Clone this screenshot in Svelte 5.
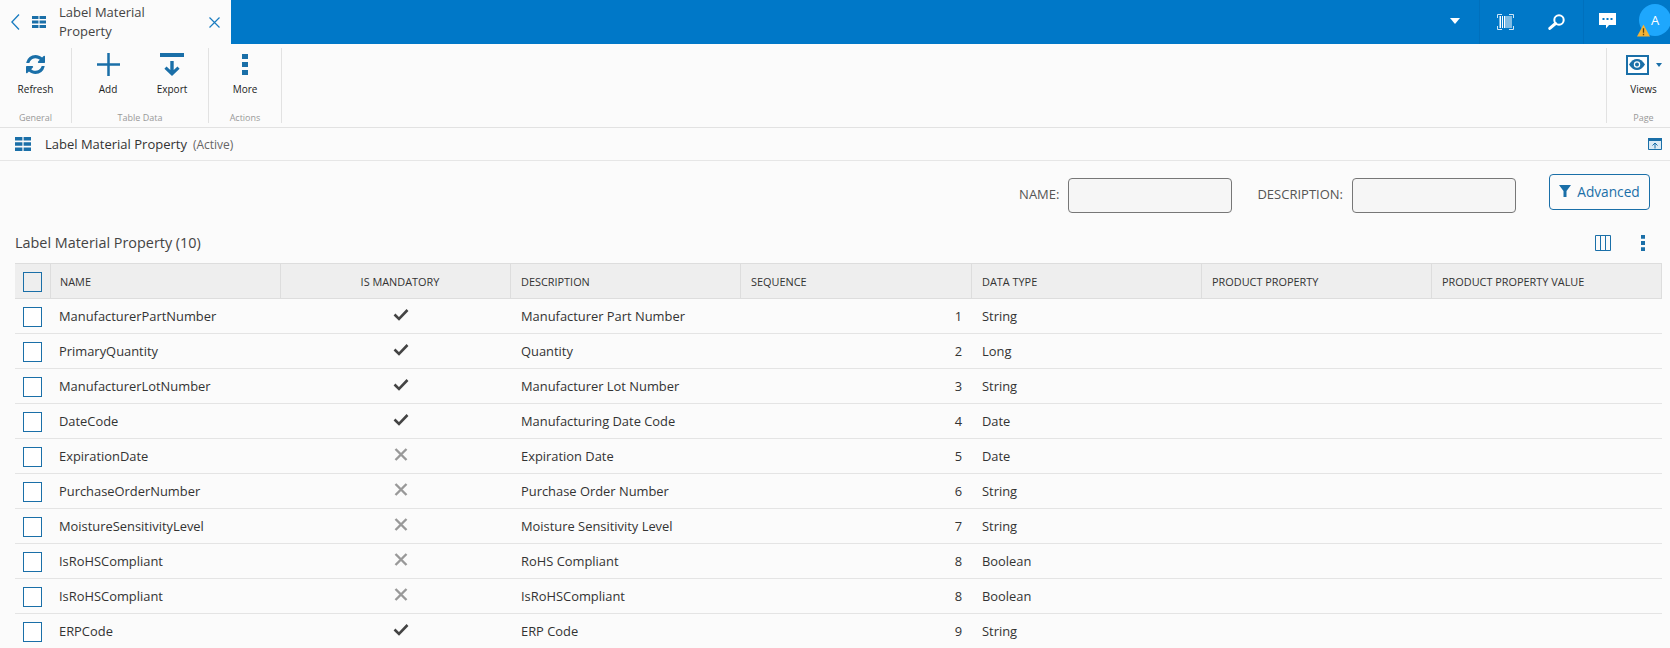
<script>
  const rows = [
    ['ManufacturerPartNumber', true, 'Manufacturer Part Number', 1, 'String'],
    ['PrimaryQuantity', true, 'Quantity', 2, 'Long'],
    ['ManufacturerLotNumber', true, 'Manufacturer Lot Number', 3, 'String'],
    ['DateCode', true, 'Manufacturing Date Code', 4, 'Date'],
    ['ExpirationDate', false, 'Expiration Date', 5, 'Date'],
    ['PurchaseOrderNumber', false, 'Purchase Order Number', 6, 'String'],
    ['MoistureSensitivityLevel', false, 'Moisture Sensitivity Level', 7, 'String'],
    ['IsRoHSCompliant', false, 'RoHS Compliant', 8, 'Boolean'],
    ['IsRoHSCompliant', false, 'IsRoHSCompliant', 8, 'Boolean'],
    ['ERPCode', true, 'ERP Code', 9, 'String']
  ];
</script>

{#snippet grid(w, h)}
  <svg class="grid-icon" width={w} height={h} viewBox="0 0 13 10" preserveAspectRatio="none">
    <path d="M0 0h6v2.5H0zM7 0h6v2.5H7zM0 3.75h6v2.5H0zM7 3.75h6v2.5H7zM0 7.5h6V10H0zM7 7.5h6V10H7z" fill="#1a6fa8" />
  </svg>
{/snippet}

{#snippet dots(w, h)}
  <svg width={w} height={h} viewBox="0 0 6 21" preserveAspectRatio="none"><path d="M0 0h6v5H0zM0 8h6v5H0zM0 16h6v5H0z" fill="#1a6fa8" /></svg>
{/snippet}

<div class="page">
  <header class="top">
    <div class="tab">
      <svg class="back" width="9" height="16" viewBox="0 0 9 16"><path d="M8 .5.9 8 8 15.500" fill="none" stroke="#1a7cc0" stroke-width="1.300" /></svg>
      {@render grid(14, 12)}
      <span class="tab-title">Label Material Property</span>
      <svg class="close" width="11" height="11" viewBox="0 0 11 11"><path d="M.5.5l10 10M10.500.5l-10 10" stroke="#1a7cc0" stroke-width="1.200" /></svg>
    </div>
    <div class="top-actions">
      <span class="caret"></span>
      <div class="sep"></div>
      <svg class="ti barcode" width="17" height="16" viewBox="0 0 17 16">
        <path d="M.5 4V.5H5M12 .5h4.500V4M.5 12v3.500H5M12 15.500h4.500V12" fill="none" stroke="#cfe6f7" stroke-width="1" />
        <path d="M2.500 2h1.500v12H2.500zM5 2h1v12H5zM7 2h1.500v12H7zM9.500 2h1v12h-1zM11.500 2h1v12h-1zM13.500 2h1v12h-1z" fill="#fff" />
      </svg>
      <svg class="ti mag" width="17" height="16" viewBox="0 0 17 16">
        <circle cx="11" cy="6" r="4.700" fill="none" stroke="#fff" stroke-width="2" />
        <path d="M7.500 9.500 1.800 14.400" stroke="#fff" stroke-width="3" stroke-linecap="round" />
      </svg>
      <div class="sep second"></div>
      <svg class="ti chat" width="17" height="16" viewBox="0 0 17 16">
        <path d="M0 0h17v12H10l-3 3.500V12H0z" fill="#fff" />
        <path d="M3.500 5h2v2h-2zM7.500 5h2v2h-2zM11.500 5h2v2h-2z" fill="#0078c8" />
      </svg>
      <div class="avatar">A
        <svg class="warn" width="13" height="13" viewBox="0 0 14 13">
          <path d="M7 0 14 13H0z" fill="#f5b335" />
          <path d="M6.300 4h1.400v5H6.300zM6.300 10h1.400v1.500H6.300z" fill="#5c4510" />
        </svg>
      </div>
    </div>
  </header>

  <section class="ribbon">
    <div class="group g1">
      <div class="items">
        <div class="item">
          <span class="icon-box">
            <svg width="19" height="19" viewBox="128 128 1536 1536" preserveAspectRatio="none">
              <path d="M1639 1056q0 5-1 7-64 268-268 434.500t-478 166.500q-146 0-282.500-55t-243.500-157l-129 129q-19 19-45 19t-45-19-19-45v-448q0-26 19-45t45-19h448q26 0 45 19t19 45-19 45l-137 137q71 66 161 102t187 36q134 0 250-65t186-179q11-17 53-117 8-23 30-23h192q13 0 22.500 9.500t9.500 22.500zm25-800v448q0 26-19 45t-45 19h-448q-26 0-45-19t-19-45 19-45l138-138q-148-137-349-137-134 0-250 65t-186 179q-11 17-53 117-8 23-30 23h-199q-13 0-22.500-9.500t-9.500-22.500v-7q65-268 270-434.500t480-166.500q146 0 284 55.500t245 156.500l130-129q19-19 45-19t45 19 19 45z" fill="#1a6fa8" />
            </svg>
          </span>
          <span class="lbl">Refresh</span>
        </div>
      </div>
      <small>General</small>
    </div>
    <div class="group g2">
      <div class="items">
        <div class="item wide">
          <span class="icon-box">
            <svg width="23" height="23" viewBox="0 0 23 23"><path d="M10.250 0h2.500v10.250H23v2.500H12.750V23h-2.500V12.750H0v-2.500h10.250z" fill="#1a6fa8" /></svg>
          </span>
          <span class="lbl">Add</span>
        </div>
        <div class="item wide">
          <span class="icon-box">
            <svg width="24" height="23" viewBox="0 0 24 23">
              <path d="M0 0h24v4H0z" fill="#1a6fa8" />
              <path d="M10.300 8h3.400v9l3.800-3.500 2.100 2.200L12 23l-7.600-7.300 2.100-2.200 3.800 3.500z" fill="#1a6fa8" />
            </svg>
          </span>
          <span class="lbl">Export</span>
        </div>
      </div>
      <small>Table Data</small>
    </div>
    <div class="group g3">
      <div class="items">
        <div class="item">
          <span class="icon-box">{@render dots(6, 21)}</span>
          <span class="lbl">More</span>
        </div>
      </div>
      <small>Actions</small>
    </div>
    <div class="spacer"></div>
    <div class="group g4">
      <div class="items">
        <div class="item">
          <span class="icon-box views-icon">
            <span class="eye-box">
              <svg width="16" height="11" viewBox="0 0 16 11">
                <path d="M0 5.500C2.500 1.800 5 0 8 0s5.500 1.800 8 5.500C13.500 9.200 11 11 8 11S2.500 9.200 0 5.500z" fill="#1a6fa8" />
                <circle cx="8" cy="5.500" r="3.200" fill="#fff" /><circle cx="8" cy="5.500" r="2" fill="#1a6fa8" />
              </svg>
            </span>
            <span class="mini-caret"></span>
          </span>
          <span class="lbl">Views</span>
        </div>
      </div>
      <small>Page</small>
    </div>
  </section>

  <section class="titlebar">
    {@render grid(16, 14)}
    <span class="page-title">Label Material Property</span>
    <span class="state">(Active)</span>
    <svg class="collapse" width="14" height="12" viewBox="0 0 14 12">
      <path d="M0 0h14v12H0z" fill="#dcebf5" />
      <path d="M0 0h14v3H0z" fill="#1a6fa8" />
      <path d="M.5.500h13v11H.5z" fill="none" stroke="#1a6fa8" />
      <path d="M7 10.500V5M4.500 7.500 7 5l2.500 2.500" fill="none" stroke="#1a6fa8" />
    </svg>
  </section>

  <section class="filters">
    <label for="f-name">NAME:</label>
    <input id="f-name" class="field" />
    <label for="f-desc" class="second-label">DESCRIPTION:</label>
    <input id="f-desc" class="field" />
    <button class="advanced">
      <svg width="12" height="12" viewBox="0 0 12 12"><path d="M0 0h12L7.500 6v6h-3V6z" fill="#1a6fa8" /></svg>
      Advanced
    </button>
  </section>

  <section class="list-head">
    <h2>Label Material Property (10)</h2>
    <svg class="cols" width="16" height="16" viewBox="0 0 16 16">
      <path d="M.5.500h15v15H.5zM5.500.500v15M10.500.500v15" fill="none" stroke="#1a6fa8" />
    </svg>
    <span class="list-dots">{@render dots(4, 16)}</span>
  </section>

  <div class="table">
    <div class="row head">
      <div class="c check"><span class="box"></span></div>
      <div class="c name">NAME</div>
      <div class="c mand">IS MANDATORY</div>
      <div class="c desc">DESCRIPTION</div>
      <div class="c seq">SEQUENCE</div>
      <div class="c type">DATA TYPE</div>
      <div class="c prop">PRODUCT PROPERTY</div>
      <div class="c val">PRODUCT PROPERTY VALUE</div>
    </div>
    {#each rows as r}
      <div class="row">
        <div class="c check"><span class="box"></span></div>
        <div class="c name">{r[0]}</div>
        <div class="c mand">
          {#if r[1]}
            <svg width="16" height="13" viewBox="0 0 16 13"><path d="M1.500 6.500 6 11 14.500 2" fill="none" stroke="#444" stroke-width="2.600" /></svg>
          {:else}
            <svg width="14" height="13" viewBox="0 0 14 13"><path d="M1.500 1 12.500 12M12.500 1 1.500 12" fill="none" stroke="#999" stroke-width="2.400" /></svg>
          {/if}
        </div>
        <div class="c desc">{r[2]}</div>
        <div class="c seq num">{r[3]}</div>
        <div class="c type">{r[4]}</div>
        <div class="c prop"></div>
        <div class="c val"></div>
      </div>
    {/each}
  </div>
</div>

<style>
  :global(body) {
    margin: 0;
    background: #fbfbfb;
    overflow: hidden;
  }
  .page {
    font-family: "Open Sans", sans-serif;
    color: #333;
    font-size: 12.9px;
    height: 648px;
    overflow: hidden;
  }
  .top {
    display: flex;
    height: 44px;
    background: #0078c8;
  }
  .tab {
    width: 231px;
    box-sizing: border-box;
    background: #fbfbfb;
    display: flex;
    align-items: center;
    padding-left: 11px;
  }
  .back { margin-right: 12px; }
  .tab-title {
    width: 140px;
    margin-left: 13px;
    font-size: 13px;
    line-height: 19px;
    color: #444;
  }
  .close { margin-left: 10px; }
  .top-actions {
    flex: 1;
    display: flex;
    align-items: center;
    justify-content: flex-end;
    height: 44px;
  }
  .caret {
    width: 0;
    height: 0;
    border: 5px solid transparent;
    border-top: 6px solid #fff;
    border-bottom: 0;
    margin: -3px 19px 0 0;
  }
  .sep { width: 1px; height: 44px; background: #0070bd; }
  .ti { flex: none; }
  .barcode { margin-left: 17px; }
  .mag { margin-left: 34px; margin-right: 18px; }
  .chat { margin-left: 15px; margin-top: -2px; }
  .avatar {
    position: relative;
    width: 32px;
    height: 32px;
    border-radius: 50%;
    background: #1ea7fd;
    color: #fff;
    font-size: 13px;
    display: flex;
    align-items: center;
    justify-content: center;
    margin: -4px -1px 0 23px;
  }
  .warn { position: absolute; left: -2px; top: 20px; }
  .ribbon {
    display: flex;
    height: 79px;
    padding-top: 4px;
    border-bottom: 1px solid #e2e2e2;
  }
  .group {
    display: flex;
    flex-direction: column;
    border-right: 1px solid #e2e2e2;
    height: 75px;
    box-sizing: border-box;
    align-items: center;
  }
  .g1 { width: 72px; }
  .g2 { width: 137px; }
  .g3 { width: 73px; }
  .g4 { width: 64px; padding-left: 10px; border-right: 0; border-left: 1px solid #e2e2e2; }
  .spacer { flex: 1; }
  .items { display: flex; flex: 1; gap: 18px; }
  .item {
    display: flex;
    flex-direction: column;
    align-items: center;
    padding-top: 5px;
  }
  .wide { width: 46px; }
  .icon-box {
    height: 23px;
    margin-bottom: 6px;
    display: flex;
    align-items: center;
    justify-content: center;
  }
  .lbl {
    font-size: 10px;
    color: #222;
    line-height: 14px;
  }
  .group small {
    font-size: 9px;
    color: #999;
    line-height: 14px;
    margin-bottom: -2px;
  }
  .eye-box {
    width: 23px;
    height: 20px;
    box-sizing: border-box;
    border: 2px solid #1a6fa8;
    background: #fff;
    display: flex;
    align-items: center;
    justify-content: center;
  }
  .mini-caret {
    width: 0;
    height: 0;
    border: 3px solid transparent;
    border-top: 4px solid #1a6fa8;
    border-bottom: 0;
    margin-left: 7px;
  }
  .titlebar {
    height: 32px;
    display: flex;
    align-items: center;
    padding: 0 8px 0 15px;
    border-bottom: 1px solid #e6e6e6;
  }
  .page-title { margin-left: 14px; font-size: 13px; color: #333; }
  .state { margin-left: 6px; font-size: 12px; color: #666; }
  .collapse { margin-left: auto; }
  .filters {
    height: 62px;
    display: flex;
    align-items: center;
    justify-content: flex-end;
    padding-right: 20px;
  }
  .filters label { font-size: 13px; color: #555; margin: 4px 9px 0 0; }
  .filters .second-label { margin-left: 25px; }
  .field {
    width: 164px;
    height: 35px;
    margin-top: 7px;
    box-sizing: border-box;
    border: 1px solid #777;
    border-radius: 4px;
    background: #f6f6f6;
  }
  .advanced {
    margin-left: 33px;
    width: 101px;
    height: 36px;
    border: 1px solid #1a6fa8;
    border-radius: 4px;
    background: transparent;
    color: #1a6fa8;
    font: 13.7px "Open Sans", sans-serif;
    display: flex;
    align-items: center;
    justify-content: center;
    gap: 6px;
    padding: 0 0 2px;
  }
  .list-head {
    height: 40px;
    box-sizing: border-box;
    padding: 0 25px 2px 15px;
    display: flex;
    align-items: center;
  }
  h2 {
    margin: 0;
    font-size: 14.4px;
    font-weight: 400;
    color: #444;
  }
  .cols { margin-left: auto; margin-top: 2px; }
  .list-dots { margin-left: 30px; margin-top: 2px; display: flex; }
  .table { margin: 0 8px 0 15px; }
  .row {
    display: grid;
    grid-template-columns: 36px 230px 230px 230px 231px 230px 230px 1fr;
    height: 35px;
    box-sizing: border-box;
    border-bottom: 1px solid #e4e4e4;
    align-items: center;
  }
  .row.head {
    height: 36px;
    background: #eee;
    border-top: 1px solid #ddd;
    border-bottom: 1px solid #ddd;
    font-size: 10.9px;
  }
  .head .c {
    height: 100%;
    display: flex;
    align-items: center;
    border-right: 1px solid #ddd;
    box-sizing: border-box;
  }
  .c { padding-left: 10px; box-sizing: border-box; min-width: 0; }
  .name { padding-left: 8px; }
  .head .name { padding-left: 9px; }
  .c.check { padding-left: 8px; display: flex; align-items: center; }
  .box {
    width: 19px;
    height: 20px;
    box-sizing: border-box;
    border: 1px solid #1a6fa8;
    display: block;
    margin-top: 1px;
  }
  .row:not(.head) .box { background: #fff; }
  .c.mand { padding: 0 0 0 9px; text-align: center; justify-content: center; }
  .c.mand svg { display: block; margin: -4px auto 0; }
  .num { text-align: right; padding-right: 10px; }
</style>
